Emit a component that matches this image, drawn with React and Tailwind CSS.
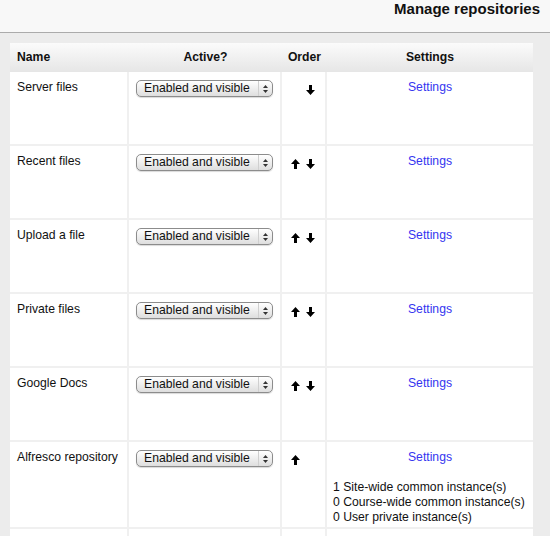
const repos = [
  { name: "Server files", up: false, down: true },
  { name: "Recent files", up: true, down: true },
  { name: "Upload a file", up: true, down: true },
  { name: "Private files", up: true, down: true },
  { name: "Google Docs", up: true, down: true },
  {
    name: "Alfresco repository",
    up: true,
    down: false,
    instances: [
      "1 Site-wide common instance(s)",
      "0 Course-wide common instance(s)",
      "0 User private instance(s)",
    ],
  },
];

function ArrowUp({ hidden }) {
  return (
    <svg width="9" height="10" viewBox="0 0 9 10" className={hidden ? "invisible" : ""}>
      <path d="M4.5 0 L9 5 L6 5 L6 10 L3 10 L3 5 L0 5 Z" fill="#000" />
    </svg>
  );
}

function ArrowDown({ hidden }) {
  return (
    <svg width="9" height="10" viewBox="0 0 9 10" className={hidden ? "invisible" : ""}>
      <path d="M4.5 10 L9 5 L6 5 L6 0 L3 0 L3 5 L0 5 Z" fill="#000" />
    </svg>
  );
}

function FakeSelect() {
  return (
    <div className="flex h-[17px] w-[137px] items-center rounded-[5px] border border-[#8c8c8c] bg-linear-to-b from-white to-[#dedede] shadow-[0_1px_1px_rgba(0,0,0,0.15)]">
      <span className="flex-1 pl-[7px] text-[12.2px] leading-[15px] text-[#111]">Enabled and visible</span>
      <span className="mr-[1px] flex h-full w-[13px] flex-col items-center justify-center gap-[2px] border-l border-[#cfcfcf]">
        <svg width="5" height="3" viewBox="0 0 5 3">
          <path d="M2.5 0 L5 3 L0 3 Z" fill="#333" />
        </svg>
        <svg width="5" height="3" viewBox="0 0 5 3">
          <path d="M0 0 L5 0 L2.5 3 Z" fill="#333" />
        </svg>
      </span>
    </div>
  );
}

function Row({ repo }) {
  const tall = !!repo.instances;
  return (
    <div
      className={
        "grid grid-cols-[119px_153px_45px_206px] border-b-2 border-[#f0f0f0] bg-white " +
        (tall ? "h-[87px]" : "h-[74px]")
      }
    >
      <div className="border-r-2 border-[#f0f0f0] pl-[7px] pt-[8px] text-[12.2px] leading-[15px] text-[#111]">
        {repo.name}
      </div>
      <div className="border-r-2 border-[#f0f0f0] pl-[7px] pt-[8px]">
        <FakeSelect />
      </div>
      <div className="flex gap-[6px] border-r-2 border-[#f0f0f0] pl-[9px] pt-[13px]">
        <ArrowUp hidden={!repo.up} />
        <ArrowDown hidden={!repo.down} />
      </div>
      <div className="px-[6px] pt-[8px] text-[12.2px] leading-[15px] text-[#111]">
        <div className="text-center">
          <a href="#" className="text-[#3535f0]">Settings</a>
        </div>
        {repo.instances && (
          <div className="mt-[15px]">
            {repo.instances.map((t) => (
              <div key={t}>{t}</div>
            ))}
          </div>
        )}
      </div>
    </div>
  );
}

export default function App() {
  return (
    <div className="h-[536px] w-[550px] overflow-hidden bg-[#ececec] font-['Liberation_Sans',Arial,sans-serif]">
      <div className="flex h-[33px] justify-end border-b border-[#ababab] bg-[#f8f8f8] pr-[10px]">
        <h2 className="text-[15px] font-bold leading-[18px] text-[#111]">Manage repositories</h2>
      </div>
      <div className="ml-[10px] mt-[10px] w-[523px]">
        <div className="grid h-[29px] grid-cols-[119px_153px_45px_206px] items-center bg-linear-to-b from-[#fbfbfb] to-[#e6e6e6] text-[12.2px] font-bold text-[#111]">
          <div className="pl-[7px]">Name</div>
          <div className="text-center">Active?</div>
          <div className="text-center">Order</div>
          <div className="text-center">Settings</div>
        </div>
        {repos.map((r) => (
          <Row key={r.name} repo={r} />
        ))}
        <div className="grid h-[40px] grid-cols-[119px_153px_45px_206px] bg-white">
          <div className="border-r-2 border-[#f0f0f0]" />
          <div className="border-r-2 border-[#f0f0f0]" />
          <div className="border-r-2 border-[#f0f0f0]" />
          <div />
        </div>
      </div>
    </div>
  );
}
